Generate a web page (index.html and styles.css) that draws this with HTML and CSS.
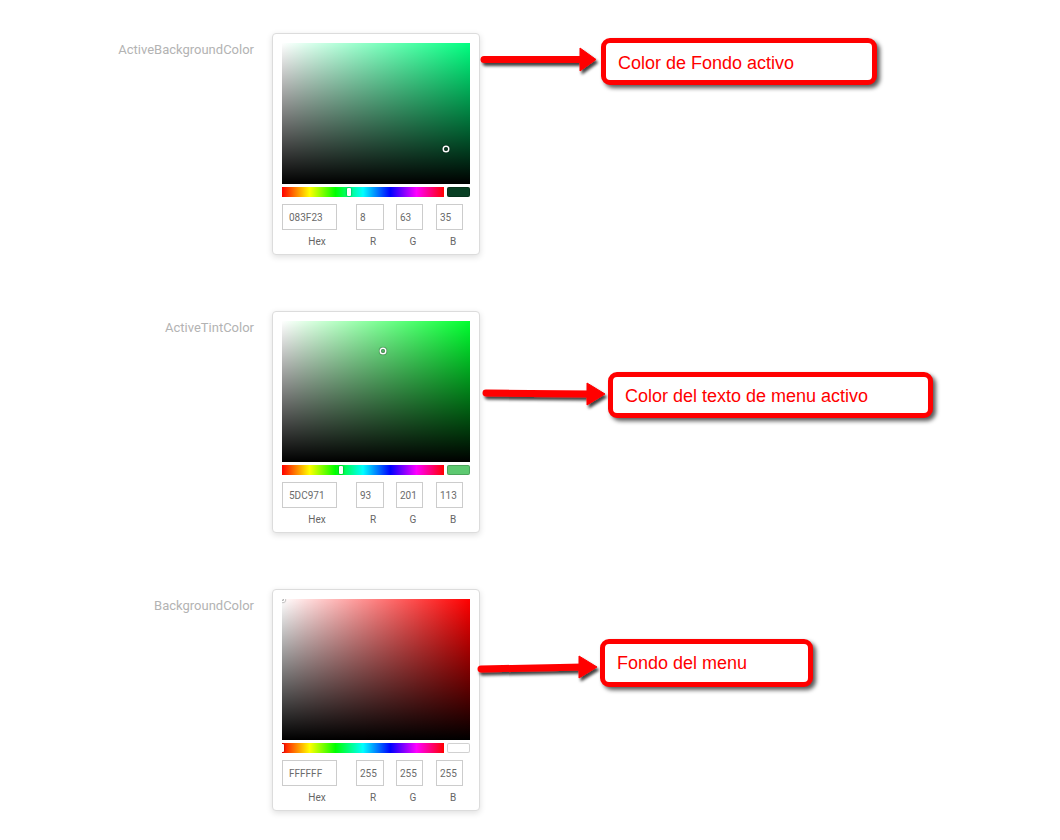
FILE: index.html
```html
<!DOCTYPE html>
<html lang="es">
<head>
<meta charset="utf-8">
<title>Colores del menú</title>
<link rel="stylesheet" href="styles.css">
</head>
<body>
<div class="page">
  <div class="rows">
    <div class="row">
      <div class="prop">ActiveBackgroundColor</div>
      <div class="picker">
        <div class="sat hue-150">
          <div class="sat-pointer" style="left:164px;top:106px"></div>
        </div>
        <div class="hue-row">
          <div class="hue"><div class="hue-pointer" style="left:67px"></div></div>
          <div class="swatch" style="background-color:#083F23"></div>
        </div>
        <div class="fields">
          <div class="field f-hex"><div class="input">083F23</div><div class="label">Hex</div></div>
          <div class="field f-r"><div class="input">8</div><div class="label">R</div></div>
          <div class="field f-g"><div class="input">63</div><div class="label">G</div></div>
          <div class="field f-b"><div class="input">35</div><div class="label">B</div></div>
        </div>
      </div>
    </div>

    <div class="row">
      <div class="prop">ActiveTintColor</div>
      <div class="picker">
        <div class="sat hue-131">
          <div class="sat-pointer" style="left:101px;top:30px"></div>
        </div>
        <div class="hue-row">
          <div class="hue"><div class="hue-pointer" style="left:59px"></div></div>
          <div class="swatch" style="background-color:#5DC971"></div>
        </div>
        <div class="fields">
          <div class="field f-hex"><div class="input">5DC971</div><div class="label">Hex</div></div>
          <div class="field f-r"><div class="input">93</div><div class="label">R</div></div>
          <div class="field f-g"><div class="input">201</div><div class="label">G</div></div>
          <div class="field f-b"><div class="input">113</div><div class="label">B</div></div>
        </div>
      </div>
    </div>

    <div class="row">
      <div class="prop">BackgroundColor</div>
      <div class="picker">
        <div class="sat hue-0">
          <div class="sat-pointer" style="left:0px;top:0px"></div>
        </div>
        <div class="hue-row">
          <div class="hue"><div class="hue-pointer" style="left:0px"></div></div>
          <div class="swatch" style="background-color:#FFFFFF"></div>
        </div>
        <div class="fields">
          <div class="field f-hex"><div class="input">FFFFFF</div><div class="label">Hex</div></div>
          <div class="field f-r"><div class="input">255</div><div class="label">R</div></div>
          <div class="field f-g"><div class="input">255</div><div class="label">G</div></div>
          <div class="field f-b"><div class="input">255</div><div class="label">B</div></div>
        </div>
      </div>
    </div>
  </div>

  <svg class="arrows" width="1060" height="840" viewBox="0 0 1060 840" aria-hidden="true">
    <defs>
      <filter id="sh" x="-10%" y="-50%" width="130%" height="250%">
        <feDropShadow dx="2" dy="3" stdDeviation="1.6" flood-color="#000" flood-opacity="0.75"/>
      </filter>
    </defs>
    <g fill="#ff0000" stroke="#ff0000" filter="url(#sh)">
      <line x1="484" y1="59.5" x2="584" y2="59.5" stroke-width="7" stroke-linecap="round"/>
      <polygon points="580,48 596,59.5 580,71" stroke-width="1" stroke-linejoin="round"/>
    </g>
    <g fill="#ff0000" stroke="#ff0000" filter="url(#sh)">
      <line x1="486" y1="393" x2="591" y2="394" stroke-width="7" stroke-linecap="round"/>
      <polygon points="587,383 605,394 587,405" stroke-width="1" stroke-linejoin="round"/>
    </g>
    <g fill="#ff0000" stroke="#ff0000" filter="url(#sh)">
      <line x1="481" y1="669" x2="583" y2="667" stroke-width="7" stroke-linecap="round"/>
      <polygon points="579,656 597,667 579,678" stroke-width="1" stroke-linejoin="round"/>
    </g>
  </svg>

  <div class="callout c1">Color de Fondo activo</div>
  <div class="callout c2">Color del texto de menu activo</div>
  <div class="callout c3">Fondo del menu</div>
</div>
</body>
</html>
```

FILE: styles.css
```css
html, body {
  margin: 0;
  padding: 0;
  background: #ffffff;
}

.page {
  position: relative;
  width: 1060px;
  height: 840px;
  overflow: hidden;
  font-family: Roboto, "Liberation Sans", Arial, sans-serif;
}

.rows {
  display: flex;
  flex-direction: column;
  gap: 56px;
  padding-top: 33px;
}

.row {
  display: flex;
  align-items: flex-start;
  gap: 18px;
}

.prop {
  width: 254px;
  text-align: right;
  font-size: 13px;
  line-height: 16px;
  color: #b3b3b3;
  padding-top: 9px;
}

.picker {
  box-sizing: border-box;
  width: 208px;
  height: 222px;
  padding: 9px;
  border: 1px solid #dcdcdc;
  border-radius: 4px;
  background: #fff;
  box-shadow: 0 2px 6px rgba(0, 0, 0, 0.13);
}

.sat {
  position: relative;
  width: 188px;
  height: 141px;
  overflow: hidden;
  background-image:
    linear-gradient(to top, #000, rgba(0, 0, 0, 0)),
    linear-gradient(to right, #fff, rgba(255, 255, 255, 0));
}

.hue-150 { background-color: hsl(150, 100%, 50%); }
.hue-131 { background-color: hsl(131, 100%, 50%); }
.hue-0 { background-color: hsl(0, 100%, 50%); }

.sat-pointer {
  position: absolute;
  width: 4px;
  height: 4px;
  border-radius: 50%;
  transform: translate(-2px, -2px);
  box-shadow: 0 0 0 1.5px #fff, inset 0 0 1px 1px rgba(0, 0, 0, 0.3), 0 0 1px 2px rgba(0, 0, 0, 0.4);
}

.hue-row {
  display: flex;
  gap: 3px;
  margin-top: 3px;
  height: 10px;
}

.hue {
  position: relative;
  width: 162px;
  height: 10px;
  overflow: hidden;
  background: linear-gradient(to right, #f00 0%, #ff0 17%, #0f0 33%, #0ff 50%, #00f 67%, #f0f 83%, #f00 100%);
}

.hue-pointer {
  position: absolute;
  top: 1px;
  width: 4px;
  height: 8px;
  border-radius: 1px;
  background: #fff;
  box-shadow: 0 0 2px rgba(0, 0, 0, 0.6);
  transform: translateX(-2px);
}

.swatch {
  width: 23px;
  height: 10px;
  border-radius: 2px;
  box-shadow: inset 0 0 0 1px rgba(0, 0, 0, 0.18);
}

.fields {
  display: flex;
  margin-top: 7px;
}

.field {
  display: flex;
  flex-direction: column;
}

.f-hex { width: 74px; }
.f-r { width: 40px; }
.f-g { width: 40px; }
.f-b { width: 34px; }

.input {
  box-sizing: border-box;
  height: 26px;
  border: 1px solid #cccccc;
  font-size: 10px;
  line-height: 25px;
  color: #6b6b6b;
  padding-left: 3px;
  white-space: nowrap;
}

.f-hex .input { width: 55px; padding-left: 6px; }
.f-r .input { width: 28px; }
.f-g .input { width: 27px; }
.f-b .input { width: 27px; }

.label {
  padding-top: 6px;
  font-size: 10px;
  line-height: 12px;
  color: #666;
  text-align: center;
  width: 34px;
}

.f-hex .label { width: 70px; }

.arrows {
  position: absolute;
  left: 0;
  top: 0;
  pointer-events: none;
}

.callout {
  position: absolute;
  box-sizing: border-box;
  height: 47px;
  border: 5px solid #ff0000;
  border-radius: 9px;
  background: #fff;
  box-shadow: 3px 3px 4px rgba(0, 0, 0, 0.65);
  padding-left: 12px;
  padding-top: 3px;
  font-family: "Liberation Sans", Arial, sans-serif;
  font-size: 18px;
  line-height: 34px;
  color: #ff0000;
  white-space: nowrap;
}

.c1 { left: 601px; top: 38px; width: 276px; }
.c2 { left: 608px; top: 372px; width: 325px; height: 46px; line-height: 33px; }
.c3 { left: 600px; top: 639px; width: 213px; height: 48px; line-height: 38px; padding-top: 0; }
```
